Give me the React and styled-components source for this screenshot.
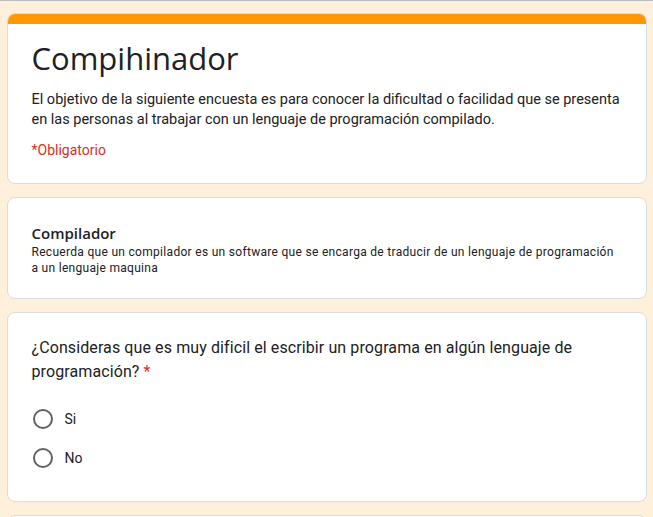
import React from "react";
import styled, { createGlobalStyle } from "styled-components";

const GlobalStyle = createGlobalStyle`
  body {
    margin: 0;
    background: #fff0dc;
    font-family: Roboto, "Liberation Sans", sans-serif;
  }
`;

const Page = styled.div`
  border-top: 1px solid #bdbdbd;
  padding: 12px 0;
`;

const Column = styled.div`
  width: 640px;
  margin: 0 auto;
  display: flex;
  flex-direction: column;
  gap: 13px;
`;

const Card = styled.section`
  background: #fff;
  border: 1px solid #dadce0;
  border-radius: 8px;
  overflow: hidden;
`;

const TopBar = styled.div`
  height: 10px;
  background: #ff9800;
`;

const CardBody = styled.div`
  padding: ${(p) => p.$pad || "24px"};
`;

const Title = styled.h1`
  margin: 0;
  font-family: "Open Sans", sans-serif;
  font-weight: 400;
  font-size: 31px;
  line-height: 40px;
  color: #202124;
`;

const Description = styled.p`
  margin: 12px 0 0;
  font-size: 14.5px;
  line-height: 20px;
  color: #202124;
`;

const Required = styled.div`
  margin-top: 12px;
  font-size: 14px;
  color: #d93025;
`;

const SectionTitle = styled.h2`
  margin: 0;
  font-family: "Open Sans", sans-serif;
  font-weight: 600;
  font-size: 15px;
  line-height: 22px;
  color: #202124;
`;

const SectionText = styled.p`
  margin: 0;
  font-size: 12px;
  line-height: 16px;
  letter-spacing: 0.3px;
  color: #202124;
`;

const Question = styled.div`
  font-size: 16px;
  line-height: 24px;
  color: #202124;
  letter-spacing: 0.1px;
`;

const Star = styled.span`
  color: #d93025;
  margin-left: 4px;
`;

const Options = styled.div`
  margin-top: 25px;
  display: flex;
  flex-direction: column;
  gap: 19px;
`;

const Option = styled.label`
  display: flex;
  align-items: center;
  gap: 12px;
  font-size: 14px;
  color: #202124;
`;

const Radio = styled.span`
  width: 16px;
  height: 16px;
  border: 2px solid #5f6368;
  border-radius: 50%;
  margin-left: 1px;
`;

export default function App() {
  return (
    <>
      <GlobalStyle />
      <Page>
        <Column>
          <Card>
            <TopBar />
            <CardBody $pad="14px 24px 25px">
              <Title>Compihinador</Title>
              <Description>
                El objetivo de la siguiente encuesta es para conocer la dificultad o facilidad que se presenta
                en las personas al trabajar con un lenguaje de programación compilado.
              </Description>
              <Required>*Obligatorio</Required>
            </CardBody>
          </Card>
          <Card>
            <CardBody $pad="24px 24px 22px">
              <SectionTitle>Compilador</SectionTitle>
              <SectionText>
                Recuerda que un compilador es un software que se encarga de traducir de un lenguaje de programación
                <br />a un lenguaje maquina
              </SectionText>
            </CardBody>
          </Card>
          <Card>
            <CardBody $pad="23px 24px 33px">
              <Question>
                ¿Consideras que es muy dificil el escribir un programa en algún lenguaje de
                <br />programación?<Star>*</Star>
              </Question>
              <Options>
                <Option>
                  <Radio />
                  Si
                </Option>
                <Option>
                  <Radio />
                  No
                </Option>
              </Options>
            </CardBody>
          </Card>
          <Card>
            <CardBody />
          </Card>
        </Column>
      </Page>
    </>
  );
}
